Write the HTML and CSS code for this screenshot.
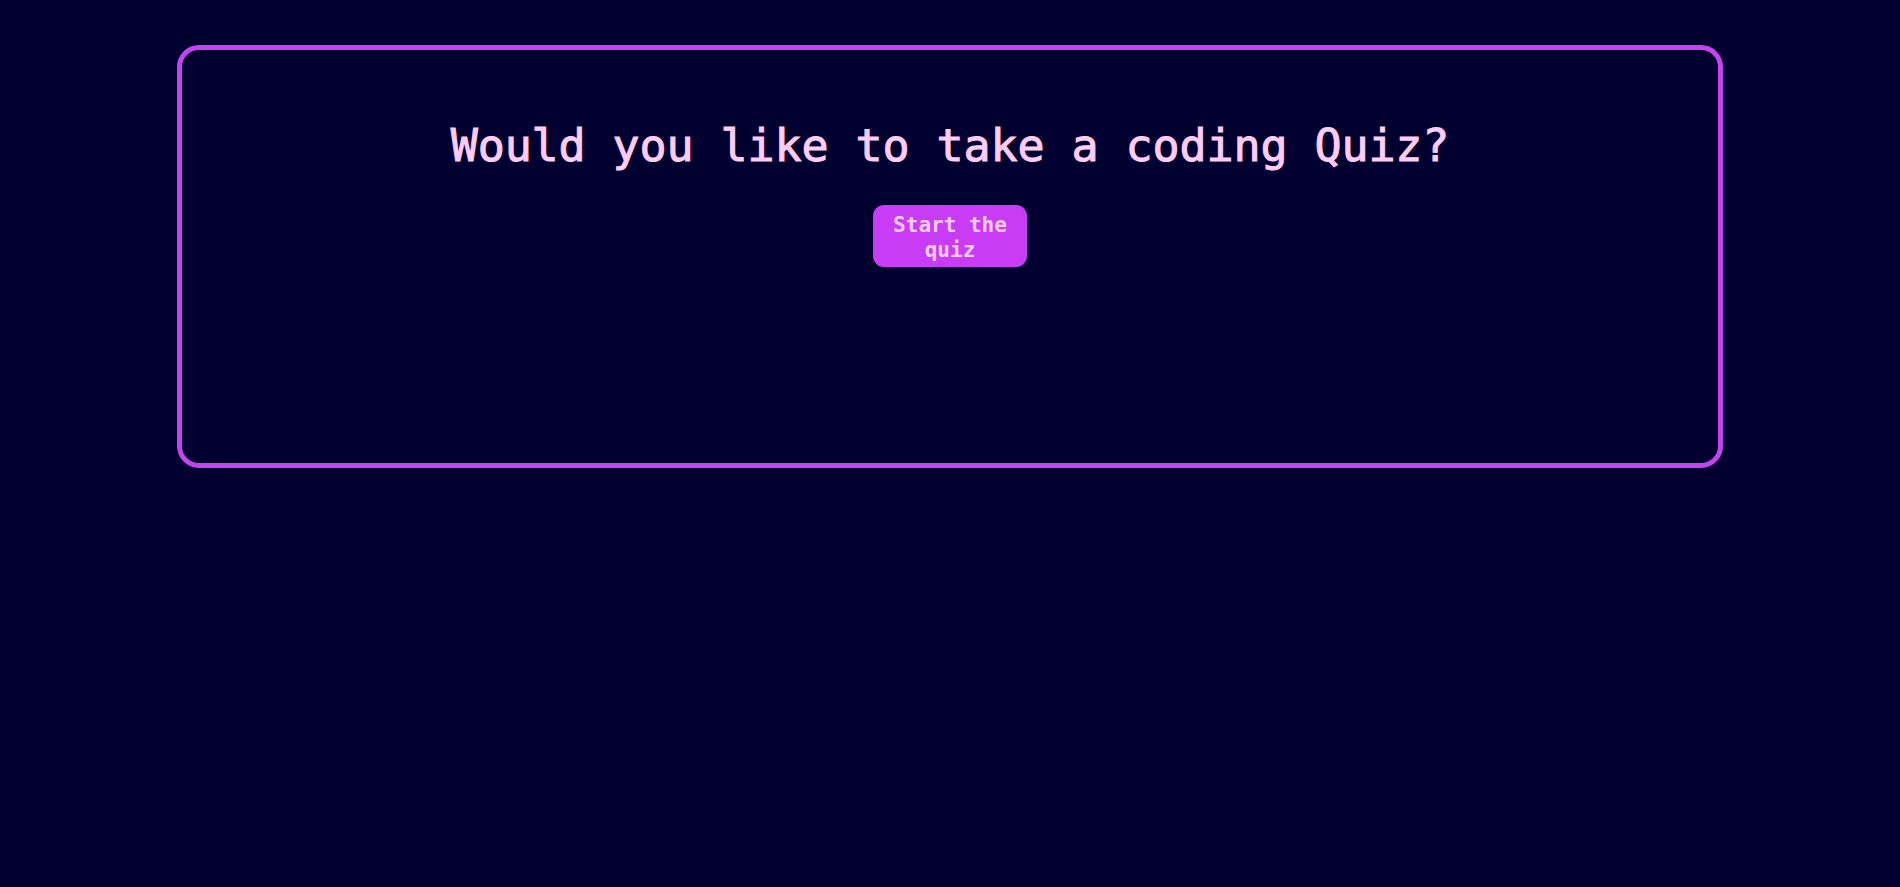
FILE: index.html
```html
<!DOCTYPE html>
<html lang="en">
<head>
<meta charset="utf-8">
<title>Coding Quiz</title>
<link rel="stylesheet" href="styles.css">
</head>
<body>
  <main class="quiz-card">
    <h1 class="quiz-title">Would you like to take a coding Quiz?</h1>
    <button class="start-btn" type="button">Start the quiz</button>
  </main>
</body>
</html>
```
FILE: styles.css
```css
html, body {
  margin: 0;
  padding: 0;
  background: #000030;
}
body {
  font-family: "DejaVu Sans Mono", "Liberation Mono", monospace;
  color: #ffccf8;
  padding-top: 45px;
}
.quiz-card {
  box-sizing: border-box;
  width: 1546px;
  height: 423px;
  margin: 0 auto;
  border: 5px solid #c443ee;
  border-radius: 22px;
  display: flex;
  flex-direction: column;
  align-items: center;
  padding-top: 70px;
}
.quiz-title {
  margin: 0;
  font-size: 45px;
  line-height: 52px;
  font-weight: 400;
  letter-spacing: -0.1px;
  color: #ffccf8;
  -webkit-text-stroke: 1px #ffccf8;
}
.start-btn {
  margin-top: 33px;
  box-sizing: border-box;
  width: 154px;
  height: 62px;
  padding: 6px 12px 2px;
  border: none;
  border-radius: 11px;
  background: #c83cf5;
  color: #ffccf8;
  font-family: "DejaVu Sans Mono", "Liberation Mono", monospace;
  font-size: 21px;
  line-height: 25px;
  font-weight: 700;
}
```
